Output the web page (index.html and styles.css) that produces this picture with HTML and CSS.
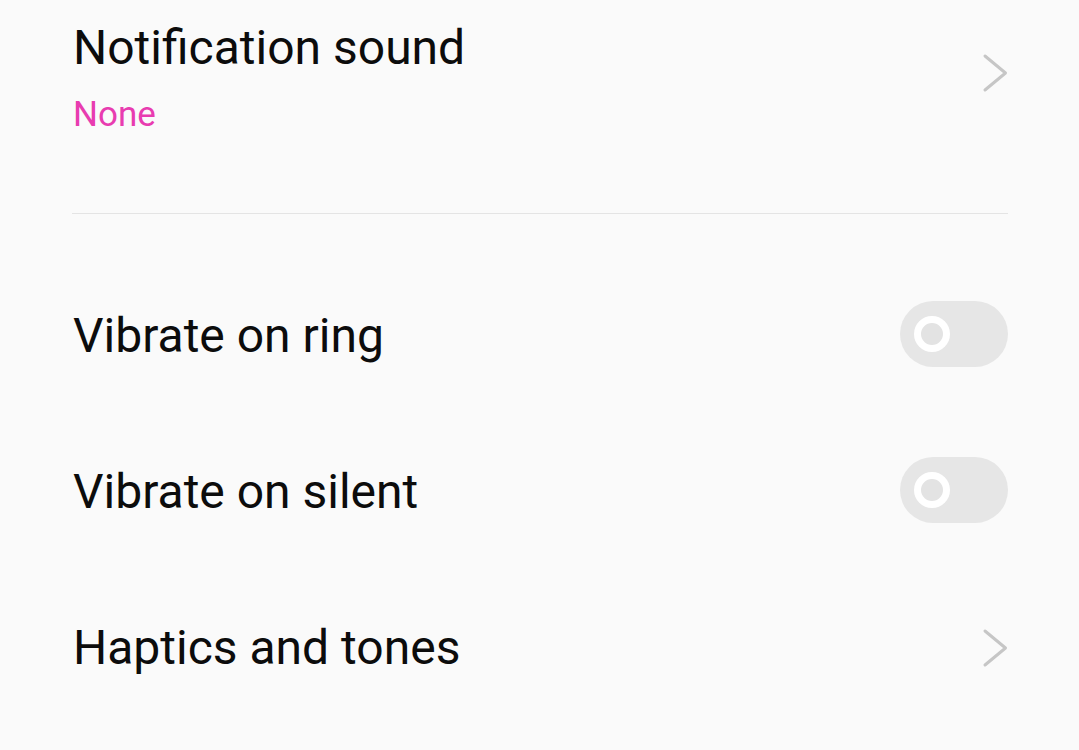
FILE: index.html
```html
<!DOCTYPE html>
<html>
<head>
<meta charset="utf-8">
<link rel="stylesheet" href="styles.css">
</head>
<body>
<div class="list">
  <div class="item item-top">
    <div class="texts">
      <div class="title">Notification sound</div>
      <div class="sub">None</div>
    </div>
    <svg class="chev chev-top" width="26" height="40" viewBox="0 0 26 40"><polyline points="3,3 23.5,20 3,37" fill="none" stroke="#c6c6c6" stroke-width="3" stroke-linecap="round" stroke-linejoin="round"/></svg>
  </div>
  <div class="divider"></div>
  <div class="rows">
    <div class="item row">
      <div class="title">Vibrate on ring</div>
      <div class="toggle"><span class="knob"></span></div>
    </div>
    <div class="item row">
      <div class="title">Vibrate on silent</div>
      <div class="toggle"><span class="knob"></span></div>
    </div>
    <div class="item row">
      <div class="title">Haptics and tones</div>
      <svg class="chev" width="26" height="40" viewBox="0 0 26 40"><polyline points="3,3 23.5,20 3,37" fill="none" stroke="#c6c6c6" stroke-width="3" stroke-linecap="round" stroke-linejoin="round"/></svg>
    </div>
  </div>
</div>
</body>
</html>
```
FILE: styles.css
```css
html, body {
  margin: 0;
  padding: 0;
  background: #fafafa;
}
body {
  font-family: Roboto, "Noto Sans", sans-serif;
  color: #0c0c0c;
  width: 1079px;
  height: 750px;
  overflow: hidden;
}
.list {
  padding: 0 71px 0 73px;
}
.item {
  display: flex;
  justify-content: space-between;
}
.item-top {
  padding: 20px 0 76px;
  align-items: flex-start;
}
.texts {
  display: flex;
  flex-direction: column;
  gap: 17px;
}
.title {
  font-size: 48px;
  line-height: 56px;
}
.sub {
  font-size: 35px;
  line-height: 44px;
  color: #e83cb0;
}
.chev {
  display: block;
  flex: none;
}
.chev-top {
  margin-top: 33px;
}
.divider {
  height: 1px;
  background: #e4e4e4;
  margin-left: -1px;
}
.rows {
  margin-top: 44px;
}
.row {
  height: 156px;
  align-items: center;
}
.toggle {
  position: relative;
  width: 108px;
  height: 66px;
  margin-bottom: 4px;
  border-radius: 33px;
  background: #e6e6e6;
  flex: none;
}
.knob {
  position: absolute;
  left: 14px;
  top: 15px;
  width: 22px;
  height: 22px;
  border: 7px solid #fff;
  border-radius: 50%;
  background: #e3e3e3;
}
```
